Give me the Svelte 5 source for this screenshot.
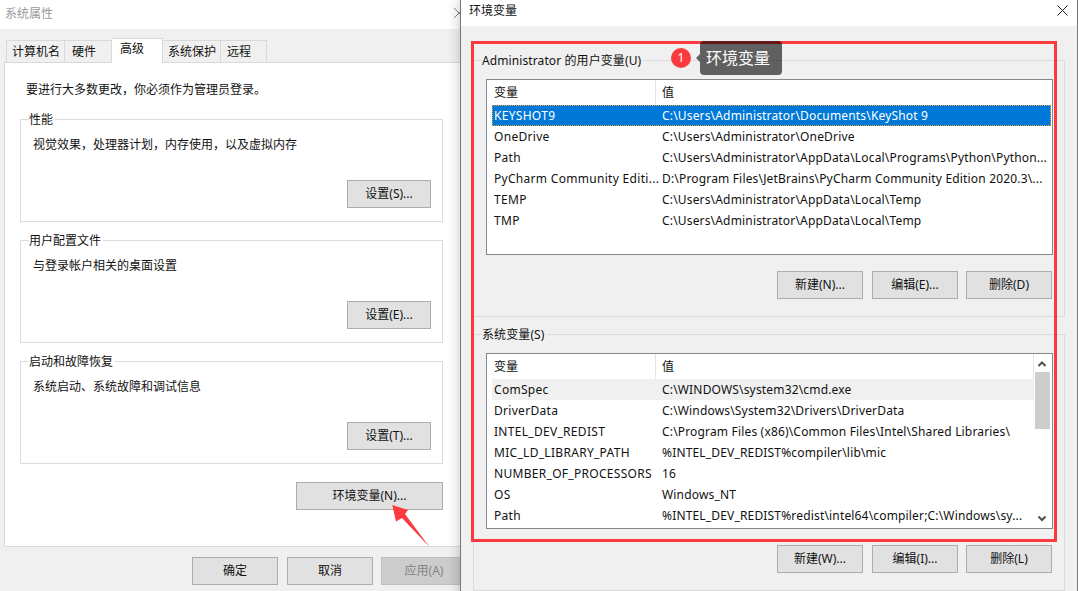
<script lang="ts">
  const tabs = [
    { label: '计算机名', width: 59, inset: 5 },
    { label: '硬件', width: 47, inset: 7 },
    { label: '高级', width: 51, inset: 8 },
    { label: '系统保护', width: 58, inset: 5 },
    { label: '远程', width: 46, inset: 6 }
  ];
  const activeTab = '高级';

  const sections = [
    { title: '性能', text: '视觉效果，处理器计划，内存使用，以及虚拟内存', action: '设置(S)...' },
    { title: '用户配置文件', text: '与登录帐户相关的桌面设置', action: '设置(E)...' },
    { title: '启动和故障恢复', text: '系统启动、系统故障和调试信息', action: '设置(T)...' }
  ];

  const userVars = [
    ['KEYSHOT9', 'C:\\Users\\Administrator\\Documents\\KeyShot 9'],
    ['OneDrive', 'C:\\Users\\Administrator\\OneDrive'],
    ['Path', 'C:\\Users\\Administrator\\AppData\\Local\\Programs\\Python\\Python...'],
    ['PyCharm Community Editi...', 'D:\\Program Files\\JetBrains\\PyCharm Community Edition 2020.3\\...'],
    ['TEMP', 'C:\\Users\\Administrator\\AppData\\Local\\Temp'],
    ['TMP', 'C:\\Users\\Administrator\\AppData\\Local\\Temp']
  ];

  const systemVars = [
    ['ComSpec', 'C:\\WINDOWS\\system32\\cmd.exe'],
    ['DriverData', 'C:\\Windows\\System32\\Drivers\\DriverData'],
    ['INTEL_DEV_REDIST', 'C:\\Program Files (x86)\\Common Files\\Intel\\Shared Libraries\\'],
    ['MIC_LD_LIBRARY_PATH', '%INTEL_DEV_REDIST%compiler\\lib\\mic'],
    ['NUMBER_OF_PROCESSORS', '16'],
    ['OS', 'Windows_NT'],
    ['Path', '%INTEL_DEV_REDIST%redist\\intel64\\compiler;C:\\Windows\\sy...']
  ];
</script>

{#snippet varList(rows: string[][], scroll: boolean, rowClass: string)}
  <div class="list" class:scrolled={scroll}>
    <div class="list-head">
      <span class="col-name">变量</span>
      <span class="col-value">值</span>
    </div>
    {#each rows as row, i}
      <div class="row" class:selected={i === 0 && rowClass === 'selected'} class:hovered={i === 0 && rowClass === 'hovered'}>
        <span class="col-name">{row[0]}</span>
        <span class="col-value">{row[1]}</span>
      </div>
    {/each}
    {#if scroll}
      <div class="scrollbar">
        <svg width="16" height="16" viewBox="0 0 16 16"><path d="M3.500 11l3.500-3.500 3.500 3.500" fill="none" stroke="#505050" stroke-width="2"/></svg>
        <div class="track"><div class="thumb"></div></div>
        <svg width="16" height="16" viewBox="0 0 16 16"><path d="M3.500 4.500l3.500 3.500 3.500-3.500" fill="none" stroke="#505050" stroke-width="2"/></svg>
      </div>
    {/if}
  </div>
{/snippet}

<main class="desktop">
  <section class="window props">
    <header class="titlebar inactive">
      <span>系统属性</span>
      <svg class="close" width="10" height="10" viewBox="0 0 10 10"><path d="M0 0l10 10M10 0L0 10" stroke="#888" fill="none"/></svg>
    </header>
    <div class="props-body">
      <div class="tabs">
        {#each tabs as tab}
          <div class="tab" class:active={tab.label === activeTab} style="width: {tab.width}px; padding-left: {tab.inset}px">{tab.label}</div>
        {/each}
      </div>
      <div class="panel">
        <p class="notice">要进行大多数更改，你必须作为管理员登录。</p>
        {#each sections as s}
          <div class="group">
            <div class="legend">{s.title}</div>
            <p class="group-text">{s.text}</p>
            <div class="group-actions"><button class="btn setting">{s.action}</button></div>
          </div>
        {/each}
        <div class="env-row"><button class="btn env">环境变量(N)...</button></div>
      </div>
      <div class="footer">
        <button class="btn wide">确定</button>
        <button class="btn wide">取消</button>
        <button class="btn wide disabled">应用(A)</button>
      </div>
    </div>
  </section>

  <section class="window env-window">
    <header class="titlebar short">
      <span>环境变量</span>
      <svg class="close" width="11" height="11" viewBox="0 0 11 11"><path d="M.5.5l10 10M10.500.5l-10 10" stroke="#222" fill="none"/></svg>
    </header>
    <div class="env-body">
      <div class="vars-group first">
        <div class="legend">Administrator 的用户变量(U)</div>
        {@render varList(userVars, false, 'selected')}
        <div class="actions">
          <button class="btn wide">新建(N)...</button>
          <button class="btn wide">编辑(E)...</button>
          <button class="btn wide">删除(D)</button>
        </div>
      </div>
      <div class="vars-group second">
        <div class="legend">系统变量(S)</div>
        {@render varList(systemVars, true, 'hovered')}
        <div class="actions">
          <button class="btn wide">新建(W)...</button>
          <button class="btn wide">编辑(I)...</button>
          <button class="btn wide">删除(L)</button>
        </div>
      </div>
    </div>
  </section>

  <div class="highlight"></div>
  <div class="badge">1</div>
  <div class="callout">环境变量</div>
  <svg class="arrow" width="60" height="60" viewBox="0 0 60 60">
    <path d="M2.300 5L18 10L15 14L39.500 47L12 18L6 21.500Z" fill="#fa3a3f"/>
  </svg>
</main>

<style>
  :global(body) {
    margin: 0;
    background: #f0f0f0;
  }

  .desktop {
    position: relative;
    width: 1078px;
    height: 591px;
    overflow: hidden;
    font-family: "Noto Sans", "Noto Sans CJK SC", sans-serif;
    font-size: 12px;
    line-height: 18px;
    color: #111;
  }

  p {
    margin: 0;
  }

  .window {
    position: absolute;
    top: 0;
    background: #f0f0f0;
    box-sizing: border-box;
  }

  .titlebar {
    position: relative;
    display: flex;
    align-items: center;
    background: #fff;
  }

  .titlebar.inactive {
    height: 29px;
    padding-left: 5px;
    color: #999;
    padding-bottom: 2px;
    box-sizing: border-box;
  }

  .titlebar.short {
    height: 26px;
    padding-left: 8px;
    padding-bottom: 5px;
    box-sizing: border-box;
  }

  .close {
    position: absolute;
    top: 8px;
  }

  /* left dialog */
  .props {
    left: 0;
    width: 470px;
    height: 591px;
  }

  .props .close {
    left: 454px;
  }

  .props-body {
    padding: 9px 0 0 4px;
  }

  .tabs {
    display: flex;
    align-items: flex-end;
    height: 24px;
    padding-left: 2px;
    position: relative;
    z-index: 1;
  }

  .tab {
    height: 22px;
    box-sizing: border-box;
    border: 1px solid #d9d9d9;
    border-bottom: none;
    border-left: none;
    background: #f0f0f0;
    line-height: 22px;
  }

  .tab:first-child {
    border-left: 1px solid #d9d9d9;
  }

  .tab.active {
    height: 25px;
    margin-bottom: -1px;
    background: #fff;
    border-left: none;
    line-height: 20px;
  }

  .panel {
    box-sizing: border-box;
    height: 485px;
    padding: 18px 26px 0 15px;
    background: #fff;
    border: 1px solid #d9d9d9;
  }

  .notice {
    padding-left: 6px;
    margin-bottom: 20px;
  }

  .group {
    box-sizing: border-box;
    height: 103px;
    margin-bottom: 18px;
    padding: 0 11px 0 8px;
    border: 1px solid #dcdcdc;
  }

  .legend {
    display: table;
    margin-top: -9px;
    padding: 0 2px 0 0;
    background: #fff;
  }

  .group-text {
    margin: 7px 0 0 4px;
  }

  .group-actions {
    display: flex;
    justify-content: flex-end;
    margin-top: 26px;
  }

  .group:last-of-type .group-actions {
    margin-top: 27px;
  }

  .env-row {
    display: flex;
    justify-content: flex-end;
  }

  .footer {
    display: flex;
    gap: 9px;
    margin: 10px 0 0 188px;
  }

  /* push buttons */
  .btn {
    display: block;
    height: 28px;
    padding: 0;
    border: 1px solid #adadad;
    background: #e1e1e1;
    font: inherit;
    color: #111;
  }

  .btn.setting {
    width: 84px;
  }

  .btn.env {
    width: 147px;
  }

  .btn.wide {
    width: 86px;
  }

  .btn.disabled {
    margin-left: -1px;
    background: #cccccc;
    border-color: #bfbfbf;
    color: #838383;
  }

  /* right dialog */
  .env-window {
    left: 460px;
    width: 618px;
    height: 600px;
    border-left: 1px solid #777;
    border-right: 1px solid #777;
    box-shadow: 0 0 12px rgba(0, 0, 0, 0.24);
  }

  .env-window .close {
    left: 596px;
    top: 5px;
  }

  .env-body {
    padding: 34px 12px 0 12px;
  }

  .vars-group {
    box-sizing: border-box;
    height: 257px;
    border: 1px solid #dcdcdc;
    padding: 0 11px 0 12px;
  }

  .vars-group.first {
    margin-bottom: 17px;
  }

  .vars-group .legend {
    background: #f0f0f0;
    margin-left: -4px;
    padding: 0 2px 0 0;
    letter-spacing: 0.1px;
  }

  .list {
    position: relative;
    box-sizing: border-box;
    height: 176px;
    margin-top: 9px;
    padding-left: 5px;
    background: #fff;
    border: 1px solid #828790;
    overflow: hidden;
  }

  .list-head {
    display: flex;
    height: 25px;
    align-items: center;
  }

  .list-head .col-name {
    border-right: 1px solid #e5e5e5;
    height: 25px;
    line-height: 25px;
  }

  .list-head .col-value {
    flex: 1;
    height: 25px;
    line-height: 25px;
  }

  .list.scrolled .list-head {
    margin-right: 18px;
  }

  .list.scrolled .list-head .col-value {
    border-right: 1px solid #e5e5e5;
  }

  .row {
    display: flex;
    height: 21px;
    line-height: 20px;
    align-items: center;
    margin-right: 1px;
    white-space: nowrap;
  }

  .row .col-name {
    letter-spacing: 0.3px;
  }

  .row .col-value {
    letter-spacing: 0.17px;
  }

  .row.selected {
    background: #0078d7;
    color: #fff;
    outline: 1px dotted #f2a33c;
    outline-offset: -1px;
  }

  .row.hovered {
    background: #f0f0f0;
    margin-right: 18px;
  }

  .col-name {
    box-sizing: border-box;
    width: 164px;
    padding-left: 2px;
    flex: none;
  }

  .col-value {
    padding-left: 6px;
  }

  .scrollbar {
    position: absolute;
    top: 1px;
    right: 1px;
    bottom: 0;
    width: 16px;
    display: flex;
    flex-direction: column;
    background: #fff;
  }

  .track {
    flex: 1;
  }

  .thumb {
    height: 57px;
    margin: 1px 1px 0 0;
    background: #cdcdcd;
  }

  .actions {
    display: flex;
    justify-content: flex-end;
    gap: 9px;
    margin-top: 16px;
    margin-right: 1px;
  }

  .actions .btn + .btn + .btn {
    margin-left: -1px;
  }

  /* annotations drawn over the screenshot */
  .highlight {
    position: absolute;
    left: 471px;
    top: 41px;
    width: 586px;
    height: 501px;
    box-sizing: border-box;
    border: 3px solid #fa3a3f;
  }

  .badge {
    position: absolute;
    left: 671px;
    top: 48px;
    width: 20px;
    height: 20px;
    border-radius: 50%;
    background: #fa3a3f;
    color: #fff;
    font-size: 12px;
    line-height: 20px;
    text-align: center;
  }

  .callout {
    position: absolute;
    left: 700px;
    top: 41px;
    width: 82px;
    height: 34px;
    padding-left: 6px;
    box-sizing: border-box;
    border-radius: 4px;
    background: rgba(0, 0, 0, 0.6);
    color: #fff;
    font-size: 16px;
    line-height: 34px;
  }

  .callout::before {
    content: "";
    position: absolute;
    left: -4px;
    top: 13px;
    border: 4px solid transparent;
    border-left: none;
    border-right-color: rgba(0, 0, 0, 0.6);
  }

  .arrow {
    position: absolute;
    left: 390px;
    top: 500px;
  }
</style>
